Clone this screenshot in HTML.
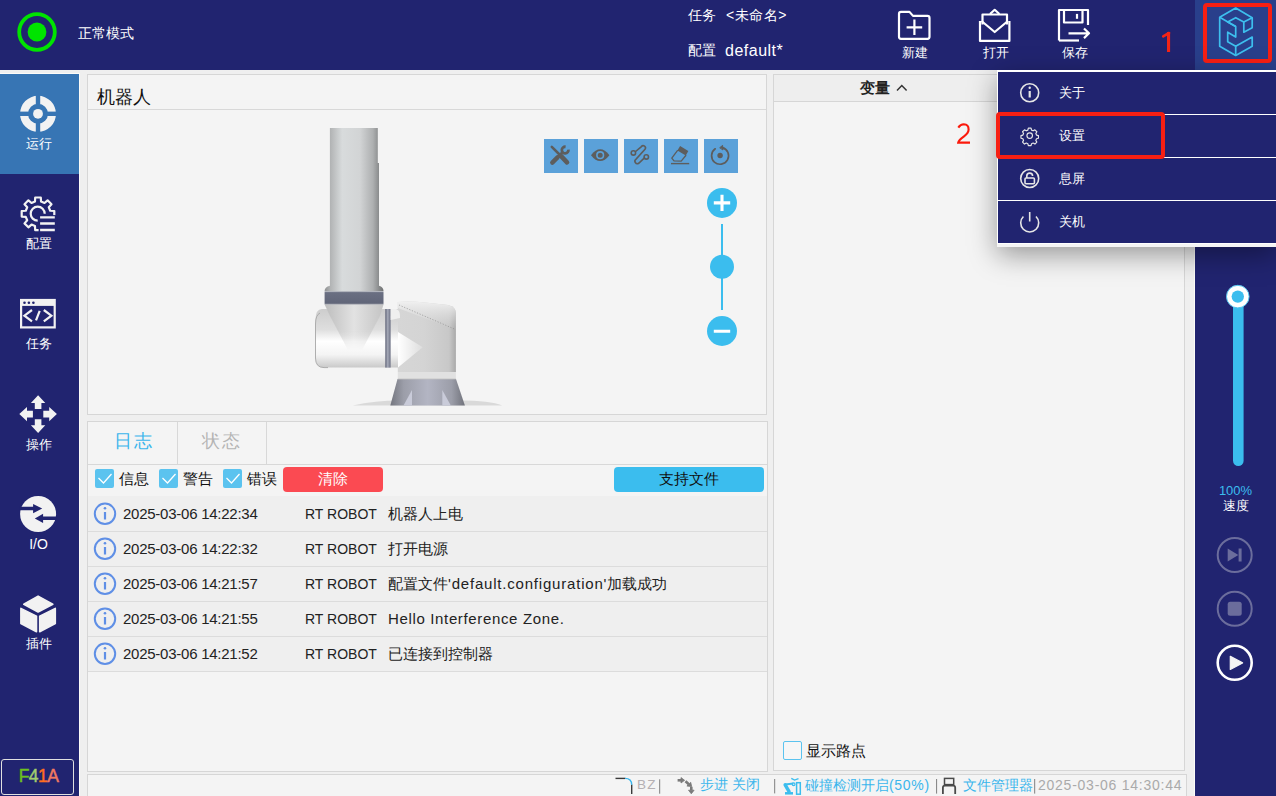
<!DOCTYPE html>
<html><head><meta charset="utf-8">
<style>
*{margin:0;padding:0;box-sizing:border-box}
html,body{width:1276px;height:796px;overflow:hidden;background:#efefef;font-family:"Liberation Sans",sans-serif;position:relative}
.a{position:absolute}
.nav{background:#212470}
.w{color:#fff}
.pnl{background:#f4f4f4;border:1px solid #d6d6d6}
</style></head><body>
<!-- header -->
<div class="a nav" style="left:0;top:0;width:1276px;height:70px"></div>


<!-- right panel -->
<div class="a nav" style="left:1195px;top:70px;width:81px;height:726px"></div>
<!-- right panel content -->
<svg class="a" style="left:1195px;top:247px" width="81" height="450">
<rect x="38" y="45" width="10.6" height="174" rx="5.3" fill="#3bbdee"/>
<circle cx="42.8" cy="49.6" r="11.3" fill="#fff" stroke="#52c4ef" stroke-width="1"/>
<circle cx="42.8" cy="49.6" r="6.2" fill="#3bbdee"/>
<g fill="none" stroke="#6b6d9c" stroke-width="2">
<circle cx="39.7" cy="308" r="17"/>
<circle cx="39.7" cy="361.8" r="17"/>
</g>
<path d="M32.7 301.5 v13 l10.6 -6.5 z" fill="#6b6d9c"/>
<rect x="43.6" y="301.5" width="3" height="13" fill="#6b6d9c"/>
<rect x="32.7" y="354.8" width="14" height="14" rx="2.5" fill="#6b6d9c"/>
<circle cx="39.7" cy="415.8" r="17" fill="none" stroke="#fff" stroke-width="2.6"/>
<path d="M35.3 409.3 v13.2 l12.3 -6.6 z" fill="#f4f4f4" stroke="#f4f4f4" stroke-width="1.2" stroke-linejoin="round"/>
</svg>
<div class="a" style="left:1195px;top:483px;width:81px;text-align:center;font-size:13px;line-height:15px;color:#3bbdee">100%</div>
<div class="a w" style="left:1195px;top:499px;width:81px;text-align:center;font-size:12.5px;line-height:15px">速度</div>
<!-- header content -->
<div class="a" style="left:1195px;top:0;width:81px;height:70px;background:#293f8b"></div>

<svg class="a" style="left:0;top:0" width="80" height="70">
<circle cx="37" cy="32" r="17.8" fill="none" stroke="#00e400" stroke-width="3.8"/>
<circle cx="37" cy="32" r="9.4" fill="#00e400"/>
</svg>
<div class="a w" style="left:78px;top:24px;font-size:14px;line-height:18px">正常模式</div>
<div class="a w" style="left:688px;top:6px;font-size:14px;line-height:18px">任务</div>
<div class="a w" style="left:726px;top:6px;font-size:14px;line-height:18px;letter-spacing:0.5px">&lt;未命名&gt;</div>
<div class="a w" style="left:688px;top:41px;font-size:14px;line-height:18px">配置</div>
<div class="a w" style="left:725px;top:41px;font-size:16px;line-height:20px;letter-spacing:0.5px">default*</div>
<svg class="a" style="left:880px;top:0" width="230" height="70" fill="none" stroke="#fff" stroke-width="2.2" stroke-linejoin="round">
<path d="M19 13.9 a2 2 0 0 1 2 -2 h8.5 l3.5 4 h14.5 a2 2 0 0 1 2 2 v18.9 a2 2 0 0 1 -2 2 h-26.5 a2 2 0 0 1 -2 -2 z"/>
<path d="M34.4 19.5 v15.6 M26.6 27.3 h15.6"/>
<path d="M100 21 v19.9 h29.4 v-19.9"/>
<path d="M101.5 21 l13.2 11 l13.2 -11"/>
<path d="M102.5 24.5 v-10 h24.5 v10"/>
<path d="M110 14 l4.7 -4.2 l4.7 4.2"/>
<path d="M179 40.5 v-30.5 h29 v15"/>
<path d="M184 10 v12.5 h18.5 v-12.5"/>
<path d="M197 13.9 v4.9"/>
<path d="M199 40.5 h-20"/>
<path d="M188.5 33.3 h20.5 M204 28.5 l5 4.8 l-5 4.8"/>
</svg>
<div class="a w" style="left:902px;top:45px;font-size:12.5px;line-height:16px">新建</div>
<div class="a w" style="left:983px;top:45px;font-size:12.5px;line-height:16px">打开</div>
<div class="a w" style="left:1062px;top:45px;font-size:12.5px;line-height:16px">保存</div>
<svg class="a" style="left:1155px;top:25px" width="25" height="33"><rect x="12" y="7" width="3.1" height="20" fill="#f42416"/><path d="M8.2 11.3 L14 8" stroke="#f42416" stroke-width="2.6" stroke-linecap="round"/></svg>
<div class="a" style="left:1203px;top:3px;width:69px;height:60px;border:4px solid #f71f13;border-radius:4px"></div>
<svg class="a" style="left:1210px;top:0" width="56" height="64" fill="none" stroke="#3dbfee" stroke-width="1.7" stroke-linejoin="round">
<path d="M25.7 8 L9.7 17.3 V46.3 L25.7 55.5 L42.2 46.3 V37 L25.7 46.3 L17.7 41.8 V32.2 L25.7 37 V26.5 L17.7 22.1 L25.7 17.7 L33.8 22.1 V32.2 L42.2 27.8 V17.7 Z"/>
<path d="M9.7 17.3 L25.7 26.5 M33.8 22.1 L42.2 17.7 M25.7 46.3 V55.5"/>
</svg>
<!-- left sidebar -->
<div class="a" style="left:0;top:73px;width:80px;height:723px;background:#fcfbf8"></div>
<div class="a" style="left:1194px;top:70px;width:1px;height:726px;background:#fcfcf8"></div>
<div class="a nav" style="left:0;top:74px;width:79px;height:722px"></div>
<div class="a" style="left:0;top:74px;width:79px;height:100px;background:#3775b4"></div>

<!-- sidebar content -->
<svg class="a" style="left:0;top:74px" width="79" height="600" fill="#f2f2f2">
<g transform="translate(38,39.8)">
<path fill-rule="evenodd" d="M0 -18 A18 18 0 1 1 0 18 A18 18 0 1 1 0 -18 Z M0 -10 A10 10 0 1 0 0 10 A10 10 0 1 0 0 -10 Z"/>
<circle r="4.9"/>
<rect x="-2.2" y="-19" width="4.4" height="10" fill="#3775b4"/>
<rect x="-2.2" y="9" width="4.4" height="10" fill="#3775b4"/>
<rect x="-19" y="-2.2" width="10" height="4.4" fill="#3775b4"/>
<rect x="9" y="-2.2" width="10" height="4.4" fill="#3775b4"/>
</g>
<g transform="translate(38,139.8)" fill="none" stroke="#f2f2f2" stroke-width="2.2" stroke-linejoin="round">
<path d="M-3.05 -12.23 L-2.8 -16.3 L2.8 -16.3 L3.05 -12.23 L6.49 -10.80 L9.6 -13.5 L13.5 -9.6 L10.80 -6.49 L12.23 -3.05 L16.3 -2.8 L16.3 2.8 L12.23 3.05 L10.80 6.49 L13.5 9.6 L9.6 13.5 L6.49 10.80 L3.05 12.23 L2.8 16.3 L-2.8 16.3 L-3.05 12.23 L-6.49 10.80 L-9.6 13.5 L-13.5 9.6 L-10.80 6.49 L-12.23 3.05 L-16.3 2.8 L-16.3 -2.8 L-12.23 -3.05 L-10.80 -6.49 L-13.5 -9.6 L-9.6 -13.5 L-6.49 -10.80 Z"/>
<rect x="0.6" y="1.3" width="19" height="18" fill="#212470" stroke="none"/>
<path d="M6.7 -0.1 A7 7 0 1 0 -0.3 6.9"/>
<path d="M2.1 3.6 h14.7 M2.1 9.7 h14.7 M2.1 16.2 h14.7" stroke-width="2.3"/>
</g>
<g transform="translate(0,200)" fill="none" stroke="#f2f2f2" stroke-width="2.2">
<rect x="21.1" y="26" width="33.6" height="27.4"/>
<rect x="21.1" y="25" width="33.6" height="6.9" fill="#f2f2f2" stroke="none"/>
<circle cx="24.5" cy="28.7" r="1.3" fill="#212470" stroke="none"/>
<circle cx="28.9" cy="28.7" r="1.3" fill="#212470" stroke="none"/>
<circle cx="33.4" cy="28.7" r="1.3" fill="#212470" stroke="none"/>
<path d="M32 36 l-7.6 5.7 l7.6 5.7 M43.8 36 l7.6 5.7 l-7.6 5.7 M39.7 36.8 l-3.7 9.6"/>
</g>
<g transform="translate(38.1,340.1)">
<path d="M0 -18.8 L7.2 -11.1 H3.3 V-5.2 H-3.3 V-11.1 H-7.2 Z"/>
<path d="M0 18.8 L7.2 11.1 H3.3 V5.2 H-3.3 V11.1 H-7.2 Z"/>
<path d="M-18.8 0 L-11.1 7.2 V3.3 H-5.2 V-3.3 H-11.1 V-7.2 Z"/>
<path d="M18.8 0 L11.1 7.2 V3.3 H5.2 V-3.3 H11.1 V-7.2 Z"/>
</g>
<g transform="translate(38.1,440)">
<circle r="18"/>
<path d="M-18.5 -7.2 H-5 V-10.1 L4.1 -5.5 L-5 -0.7 V-3.8 H-18.5 Z" fill="#212470"/>
<path d="M18.5 2.6 H5 V-0.3 L-3.3 4.4 L5 9.1 V6 H18.5 Z" fill="#212470"/>
</g>
<g transform="translate(0,500)" stroke="#f2f2f2" stroke-width="1.6" stroke-linejoin="round">
<path d="M38.1 22.1 L52.8 30.3 L38.1 38 L23.8 30.3 Z"/>
<path d="M20.9 34.4 L36.5 42.1 V57.7 L20.9 49.5 Z"/>
<path d="M55.3 34.4 L39.7 42.1 V57.7 L55.3 49.5 Z"/>
</g>
</svg>
<div class="a w" style="left:0;top:136px;width:77px;text-align:center;font-size:13px;line-height:16px">运行</div>
<div class="a w" style="left:0;top:236px;width:77px;text-align:center;font-size:13px;line-height:16px">配置</div>
<div class="a w" style="left:0;top:336px;width:77px;text-align:center;font-size:13px;line-height:16px">任务</div>
<div class="a w" style="left:0;top:437px;width:77px;text-align:center;font-size:13px;line-height:16px">操作</div>
<div class="a w" style="left:0;top:536px;width:77px;text-align:center;font-size:14px;line-height:16px">I/O</div>
<div class="a w" style="left:0;top:636px;width:77px;text-align:center;font-size:13px;line-height:16px">插件</div>
<div class="a" style="left:1px;top:759px;width:73px;height:36px;border:1.5px solid #e0e0e0;border-radius:3px"></div>
<div class="a" style="left:1px;top:766px;width:75px;text-align:center;font-size:17.5px;line-height:20px;-webkit-text-stroke:0.45px currentColor;letter-spacing:-0.6px"><span style="color:#6cc11f;-webkit-text-stroke:0.45px #6cc11f">F</span><span style="color:#a3cf6d;-webkit-text-stroke:0.45px #a3cf6d">4</span><span style="color:#ff6d1f;-webkit-text-stroke:0.45px #ff6d1f">1</span><span style="color:#f17a60;-webkit-text-stroke:0.45px #f17a60">A</span></div>
<!-- robot panel -->
<div class="a pnl" style="left:87px;top:74px;width:680px;height:341px"></div>

<!-- robot panel content -->
<div class="a" style="left:97px;top:87px;font-size:18px;line-height:21px;color:#111">机器人</div>
<div class="a" style="left:88px;top:109px;width:678px;height:1px;background:#d8d8d8"></div>
<svg class="a" style="left:300px;top:110px" width="230" height="296">
<defs>
<linearGradient id="cyl" x1="0" x2="1" y1="0" y2="0">
<stop offset="0" stop-color="#8f9192"/><stop offset="0.1" stop-color="#b2b4b5"/><stop offset="0.3" stop-color="#d8dbdc"/><stop offset="0.6" stop-color="#d2d4d5"/><stop offset="0.82" stop-color="#aeb0b1"/><stop offset="1" stop-color="#6e7071"/>
</linearGradient>
<linearGradient id="band" x1="0" x2="0" y1="0" y2="1">
<stop offset="0" stop-color="#d2d4d8"/><stop offset="0.12" stop-color="#6a6f82"/><stop offset="0.88" stop-color="#616679"/><stop offset="1" stop-color="#8d909c"/>
</linearGradient>
<linearGradient id="tube" x1="0" x2="0" y1="0" y2="1">
<stop offset="0" stop-color="#cdcdcd"/><stop offset="0.35" stop-color="#dedede"/><stop offset="0.55" stop-color="#ffffff"/><stop offset="0.78" stop-color="#f4f4f4"/><stop offset="1" stop-color="#c9c9c9"/>
</linearGradient>
<linearGradient id="cone" x1="0" x2="1" y1="0" y2="0">
<stop offset="0" stop-color="#bdbdbd"/><stop offset="0.5" stop-color="#e2e2e2"/><stop offset="1" stop-color="#c4c4c4"/>
</linearGradient>
<linearGradient id="joint" x1="0" x2="1" y1="0" y2="0">
<stop offset="0" stop-color="#d6d6d6"/><stop offset="0.45" stop-color="#d4d4d4"/><stop offset="0.88" stop-color="#c8c8c8"/><stop offset="1" stop-color="#a9a9a9"/>
</linearGradient>
<linearGradient id="jtop" x1="0" x2="0" y1="0" y2="1">
<stop offset="0" stop-color="#f0f0f0"/><stop offset="1" stop-color="#d6d6d6" stop-opacity="0"/>
</linearGradient>
<linearGradient id="base" x1="0" x2="1" y1="0" y2="0">
<stop offset="0" stop-color="#74767f"/><stop offset="0.18" stop-color="#9c9ea9"/><stop offset="0.5" stop-color="#b3b5c3"/><stop offset="0.82" stop-color="#9c9ea9"/><stop offset="1" stop-color="#70727b"/>
</linearGradient>
<linearGradient id="ring" x1="0" x2="1" y1="0" y2="0">
<stop offset="0" stop-color="#5e6276"/><stop offset="0.45" stop-color="#a6aab8"/><stop offset="1" stop-color="#6a6e82"/>
</linearGradient>
<radialGradient id="hl" cx="0.5" cy="0.5" r="0.5">
<stop offset="0" stop-color="#ffffff"/><stop offset="1" stop-color="#ffffff" stop-opacity="0"/>
</radialGradient>
<linearGradient id="hw" x1="0" x2="1" y1="0" y2="0"><stop offset="0" stop-color="#ffffff"/><stop offset="1" stop-color="#ffffff" stop-opacity="0.2"/></linearGradient>
<linearGradient id="cmg" x1="0" x2="0" y1="0" y2="1"><stop offset="0.55" stop-color="#fff"/><stop offset="1" stop-color="#000"/></linearGradient>
<mask id="cm" maskUnits="userSpaceOnUse" x="0" y="190" width="100" height="55"><rect x="0" y="194" width="100" height="46" fill="url(#cmg)"/></mask>
</defs>
<path d="M52.7 295.5 Q75 290.6 100 290.6 L160 290.6 Q190 290.6 202.2 295.5 Z" fill="#d9d9d9"/>
<path d="M97.5 269 H156 L164.9 295.5 H90.3 Z" fill="url(#base)"/>
<path d="M112 280 V295.5 H103.5 Z" fill="#c9cbd9"/>
<path d="M142.3 280 V295.5 H150.8 Z" fill="#c9cbd9"/>

<rect x="97.8" y="262" width="58.1" height="7" fill="#e1e1e1"/>
<path d="M97.8 269 H155.9" stroke="#c0c0c0" stroke-width="0.8"/>
<path d="M97.8 192 Q110 191 125 192.5 L148 195 Q155.9 197 155.9 203 V262 H97.8 Z" fill="url(#joint)"/>
<path d="M97.8 192 Q110 191 125 192.5 L148 195 Q155.9 197 155.9 203 V220 L97.8 198 Z" fill="url(#jtop)"/>
<path d="M99 195 L155.5 219.5" stroke="#8e8e8e" stroke-width="0.7" stroke-dasharray="1.2 1.6" fill="none"/>
<path d="M22 199 Q15.5 199 15.5 210 V248 Q15.5 257.6 24 257.6 H98 V199 Z" fill="url(#tube)"/>
<path d="M98 222 L122.7 237.3 L98 257.6 Z" fill="url(#hw)"/>
<path d="M20 203 Q15.5 205 15.5 214 V248 Q15.5 257.6 24 257.6 H28" fill="none" stroke="#a6a6a6" stroke-width="0.9"/>
<path d="M24.6 194.5 H83.5 L80 206 L62 240 H48 L30 206 Z" fill="url(#cone)" mask="url(#cm)"/>


<rect x="85.3" y="199" width="5.3" height="58.6" fill="url(#ring)"/>
<path d="M90.6 199 H96 Q100 200 100 206 V208 L90.6 210 Z" fill="#efefef"/>
<path d="M29.9 17.9 H77.8 V53 H79 V175.8 Q83.5 177 83.5 181 H24.6 Q24.6 177 29.9 175.8 Z" fill="url(#cyl)"/>
<rect x="24.6" y="181" width="58.9" height="13.5" fill="url(#band)"/>
</svg>
<svg class="a" style="left:540px;top:135px" width="210" height="215">
<g fill="#5ba1d9">
<rect x="4" y="4" width="34" height="34"/><rect x="44" y="4" width="34" height="34"/><rect x="84" y="4" width="34" height="34"/><rect x="124" y="4" width="34" height="34"/><rect x="164" y="4" width="34" height="34"/>
</g>
<g fill="none" stroke="#5d5d5d" stroke-linecap="round">
<path d="M11.8 11.8 L20.5 20.5" stroke-width="2.6"/>
<path d="M21.6 21.6 L27 27.3" stroke-width="4.6"/>
<path d="M12.3 27.6 L17.5 22.4" stroke-width="4.4"/>
<path d="M18 22 L21.2 18.8" stroke-width="3.2"/>
<path d="M28.4 14.6 A3.3 3.3 0 1 1 25.6 11.8" stroke-width="2.8" stroke-linecap="butt"/>
<path d="M51 20.2 Q60.2 8.4 69.4 20.2 Q60.2 32 51 20.2 Z" fill="#5d5d5d" stroke="none"/>
<circle cx="60.2" cy="20.2" r="3.3" fill="none" stroke="#5ba1d9" stroke-width="1.6"/>
<circle cx="93.4" cy="17.9" r="2.2" stroke-width="1.6"/>
<circle cx="106.3" cy="21.9" r="2.2" stroke-width="1.6"/>
<path d="M95.6 16.5 L101.4 11.6 A2.25 2.25 0 0 1 105 14.3 L96.1 24.1 A2.47 2.47 0 0 0 98.7 28.3 L104.4 22.9" stroke-width="1.6"/>
<path d="M140.1 11 L148.3 16.1 L145.8 20.5 L137.4 15.6 Z" fill="#5d5d5d" stroke="none"/>
<path d="M137.4 15.6 L131.8 23.2 L134 25.9 L141.2 26.2 L145.8 20.5" stroke-width="1.3" stroke-linejoin="round"/>
<path d="M131 28.6 H149.2" stroke-width="1.4" stroke-linecap="butt"/>
<path d="M182.5 12.6 A8.5 8.5 0 1 1 175.2 13.8" stroke-width="1.7"/>
<path d="M180 12.5 L182.6 10.4 L182.9 14.6 Z" fill="#5d5d5d" stroke-width="1" stroke-linejoin="round"/>
<circle cx="180.1" cy="20.5" r="2.7" fill="#5d5d5d" stroke="none"/>
</g>
<g fill="#3bbdee">
<circle cx="182" cy="67.9" r="15"/>
<rect x="181" y="89" width="2" height="86"/>
<circle cx="182" cy="131.8" r="12"/>
<circle cx="182" cy="196" r="15"/>
</g>
<path d="M173.8 67.9 h16.4 M182 59.7 v16.4 M173.8 196.3 h16.4" stroke="#fff" stroke-width="3.1"/>
</svg>
<!-- log panel -->
<div class="a pnl" style="left:87px;top:421px;width:681px;height:351px"></div>

<!-- log panel content -->
<div class="a" style="left:88px;top:464px;width:679px;height:1px;background:#d8d8d8"></div>
<div class="a" style="left:177px;top:422px;width:1px;height:42px;background:#d8d8d8"></div>
<div class="a" style="left:266px;top:422px;width:1px;height:42px;background:#d8d8d8"></div>
<div class="a" style="left:114px;top:431px;font-size:18px;line-height:21px;letter-spacing:1.5px;color:#3bb6ec">日志</div>
<div class="a" style="left:202px;top:431px;font-size:18px;line-height:21px;letter-spacing:1.5px;color:#b4b4b4">状态</div>
<svg class="a" style="left:88px;top:465px" width="300" height="30">
<g fill="#5bc3ef"><rect x="7" y="4" width="19" height="19" rx="2"/><rect x="71" y="4" width="19" height="19" rx="2"/><rect x="135" y="4" width="19" height="19" rx="2"/></g>
<g fill="none" stroke="#fff" stroke-width="1.3"><path d="M10.5 13 l5 5 l8 -9"/><path d="M74.5 13 l5 5 l8 -9"/><path d="M138.5 13 l5 5 l8 -9"/></g>
</svg>
<div class="a" style="left:119px;top:469px;font-size:15px;line-height:19px;color:#111">信息</div>
<div class="a" style="left:183px;top:469px;font-size:15px;line-height:19px;color:#111">警告</div>
<div class="a" style="left:247px;top:469px;font-size:15px;line-height:19px;color:#111">错误</div>
<div class="a" style="left:283px;top:467px;width:100px;height:25px;background:#fb4a52;border-radius:4px;color:#fff;text-align:center;font-size:15px;line-height:23px">清除</div>
<div class="a" style="left:614px;top:467px;width:150px;height:25px;background:#3bbdee;border-radius:4px;color:#111;text-align:center;font-size:15px;line-height:23px">支持文件</div>
<div class="a" style="left:88px;top:496px;width:679px;height:175px;background:#efefef"></div>
<div class="a" style="left:88px;top:531px;width:679px;height:1px;background:#dcdcdc"></div>
<div class="a" style="left:88px;top:566px;width:679px;height:1px;background:#dcdcdc"></div>
<div class="a" style="left:88px;top:601px;width:679px;height:1px;background:#dcdcdc"></div>
<div class="a" style="left:88px;top:636px;width:679px;height:1px;background:#dcdcdc"></div>
<div class="a" style="left:88px;top:671px;width:679px;height:1px;background:#dcdcdc"></div>
<svg class="a" style="left:88px;top:496px" width="30" height="175" fill="none" stroke="#5f8fe6" stroke-width="1.8">
<g transform="translate(0,0)"><circle cx="17" cy="17.8" r="10.2" stroke-width="2"/><path d="M17 16 v7.5" stroke-width="2.2"/><circle cx="17" cy="12.3" r="1.3" fill="#5f8fe6" stroke="none"/></g><g transform="translate(0,35)"><circle cx="17" cy="17.8" r="10.2" stroke-width="2"/><path d="M17 16 v7.5" stroke-width="2.2"/><circle cx="17" cy="12.3" r="1.3" fill="#5f8fe6" stroke="none"/></g><g transform="translate(0,70)"><circle cx="17" cy="17.8" r="10.2" stroke-width="2"/><path d="M17 16 v7.5" stroke-width="2.2"/><circle cx="17" cy="12.3" r="1.3" fill="#5f8fe6" stroke="none"/></g><g transform="translate(0,105)"><circle cx="17" cy="17.8" r="10.2" stroke-width="2"/><path d="M17 16 v7.5" stroke-width="2.2"/><circle cx="17" cy="12.3" r="1.3" fill="#5f8fe6" stroke="none"/></g><g transform="translate(0,140)"><circle cx="17" cy="17.8" r="10.2" stroke-width="2"/><path d="M17 16 v7.5" stroke-width="2.2"/><circle cx="17" cy="12.3" r="1.3" fill="#5f8fe6" stroke="none"/></g>
</svg>
<div class="a" style="left:123px;top:504px;font-size:15px;line-height:19px;color:#222;letter-spacing:-0.25px">
<div style="height:35px">2025-03-06 14:22:34</div>
<div style="height:35px">2025-03-06 14:22:32</div>
<div style="height:35px">2025-03-06 14:21:57</div>
<div style="height:35px">2025-03-06 14:21:55</div>
<div style="height:35px">2025-03-06 14:21:52</div>
</div>
<div class="a" style="left:305px;top:505px;font-size:14px;line-height:19px;color:#222">
<div style="height:35px">RT ROBOT</div><div style="height:35px">RT ROBOT</div><div style="height:35px">RT ROBOT</div><div style="height:35px">RT ROBOT</div><div style="height:35px">RT ROBOT</div>
</div>
<div class="a" style="left:388px;top:504px;font-size:15px;line-height:19px;color:#222">
<div style="height:35px">机器人上电</div>
<div style="height:35px">打开电源</div>
<div style="height:35px">配置文件<span style="letter-spacing:0.8px">'default.configuration'</span>加载成功</div>
<div style="height:35px;letter-spacing:0.65px">Hello Interference Zone.</div>
<div style="height:35px">已连接到控制器</div>
</div>
<!-- var panel -->
<div class="a pnl" style="left:773px;top:74px;width:412px;height:697px"></div>

<!-- var panel content -->
<div class="a" style="left:774px;top:75px;width:410px;height:27px;background:#eeeeee;border-bottom:1px solid #d6d6d6"></div>
<div class="a" style="left:860px;top:78px;font-size:15px;line-height:19px;color:#222;font-weight:600">变量</div>
<svg class="a" style="left:894px;top:80px" width="14" height="14"><path d="M3 10.5 l4.8 -5 l4.8 5" fill="none" stroke="#333" stroke-width="1.5"/></svg>
<div class="a" style="left:783px;top:741px;width:19px;height:19px;border:1.5px solid #5bc3ef;border-radius:2px;background:#f6f6f6"></div>
<div class="a" style="left:806px;top:741px;font-size:15px;line-height:19px;color:#111">显示路点</div>
<!-- status bar -->
<div class="a pnl" style="left:87px;top:774px;width:1100px;height:30px"></div>

<!-- status bar content -->
<svg class="a" style="left:600px;top:774px" width="600" height="22">
<path d="M15.5 4.4 H25.2" fill="none" stroke="#3a3a3a" stroke-width="1.4"/>
<path d="M31.7 10.4 V20.1" fill="none" stroke="#3a3a3a" stroke-width="1.4"/>
<path d="M25 4.4 Q31.7 4.4 31.7 10.8" fill="none" stroke="#3bb6ec" stroke-width="1.4"/>
<rect x="59.1" y="5.3" width="1.1" height="14.4" fill="#8a8a8a"/>
<g stroke="#7a7a7a" fill="#7a7a7a" stroke-width="2.6">
<path d="M77.6 6.3 H81.5" fill="none"/>
<path d="M81 3.6 L84.6 6.3 L81 9 Z" stroke-width="0.8"/>
<path d="M85.5 7.3 L88.8 10.3" fill="none"/>
<path d="M86.9 12 L91.7 12.6 L90.7 8.3 Z" stroke-width="0.8"/>
<path d="M91.3 12.8 V16.5" fill="none"/>
<path d="M88.5 16.2 H94.1 L91.3 19.8 Z" stroke-width="0.8"/>
</g>
<rect x="174.1" y="5" width="1.1" height="14.4" fill="#8a8a8a"/>
<g fill="none" stroke="#3bbdee">
<path d="M185 19.3 H193" stroke-width="2.5"/>
<path d="M185.2 10.8 L189.5 18.3" stroke-width="3.4"/>
<path d="M185 10.5 L193.3 9.6" stroke-width="2"/>
<circle cx="185.2" cy="10.8" r="1.8" fill="#3bbdee" stroke="none"/>
<circle cx="193.6" cy="10.3" r="1.4" stroke-width="1.2"/>
<path d="M191.3 4.4 L194.6 6.1 L198.5 4.7" stroke-width="1.4"/>
<rect x="196.6" y="8.7" width="3.7" height="11.5" stroke-width="1.5"/>
</g>
<rect x="336" y="5" width="1.1" height="14.6" fill="#8a8a8a"/>
<g fill="none" stroke="#4a4a4a">
<rect x="344.5" y="4.4" width="9.2" height="6.2" stroke-width="1.5"/>
<path d="M342.9 20 V13.6 Q342.9 11.6 344.9 11.6 H353.2 Q355.2 11.6 355.2 13.6 V20" stroke-width="1.8"/>
</g>
<rect x="434.1" y="5" width="1.1" height="14.6" fill="#8a8a8a"/>
</svg>
<div class="a" style="left:637px;top:777px;font-size:13.5px;line-height:16px;letter-spacing:1.2px;color:#b5b0b3">BZ</div>
<div class="a" style="left:700px;top:777px;font-size:13.5px;line-height:16px;color:#3bb6ec">步进 关闭</div>
<div class="a" style="left:805px;top:776px;font-size:14px;line-height:18px;color:#3bb6ec">碰撞检测开启<span style="letter-spacing:0.7px">(50%)</span></div>
<div class="a" style="left:963px;top:776px;font-size:14px;line-height:18px;color:#3bb6ec">文件管理器</div>
<div class="a" style="left:1038px;top:776px;font-size:14px;line-height:18px;color:#aaaaaa;letter-spacing:0.75px">2025-03-06 14:30:44</div>
<!-- menu -->
<div class="a" style="left:997px;top:70px;width:279px;height:177px;background:#f4f4f4;box-shadow:0 8px 26px rgba(0,0,0,0.38)"></div>
<div class="a" style="left:997px;top:70px;width:279px;height:174px;background:#fff"></div>
<div class="a nav" style="left:998px;top:72px;width:278px;height:171px"></div>
<div class="a" style="left:998px;top:114px;width:278px;height:1px;background:#fff"></div>
<div class="a" style="left:998px;top:157px;width:278px;height:1px;background:#fff"></div>
<div class="a" style="left:998px;top:200px;width:278px;height:1px;background:#fff"></div>
<svg class="a" style="left:1010px;top:72px" width="40" height="171" fill="none" stroke="#e6e6e6" stroke-width="1.6">
<circle cx="19.7" cy="20.7" r="9"/>
<path d="M19.7 19 v6.5" stroke-width="2.2"/><circle cx="19.7" cy="15.8" r="1.2" fill="#e6e6e6" stroke="none"/>
<g transform="translate(19.7,63.6) scale(0.84)">
<path d="M-1.6 -8.8 h3.2 l0.6 2.3 l1.9 0.8 l2.1 -1.2 l2.3 2.3 l-1.2 2.1 l0.8 1.9 l2.3 0.6 v3.2 l-2.3 0.6 l-0.8 1.9 l1.2 2.1 l-2.3 2.3 l-2.1 -1.2 l-1.9 0.8 l-0.6 2.3 h-3.2 l-0.6 -2.3 l-1.9 -0.8 l-2.1 1.2 l-2.3 -2.3 l1.2 -2.1 l-0.8 -1.9 l-2.3 -0.6 v-3.2 l2.3 -0.6 l0.8 -1.9 l-1.2 -2.1 l2.3 -2.3 l2.1 1.2 l1.9 -0.8 z" stroke-linejoin="round" stroke-width="1.4"/>
<circle r="3.3" stroke-width="1.4"/>
</g>
<circle cx="19.7" cy="106.5" r="9"/>
<rect x="15" y="106" width="9.4" height="5.8" rx="1"/>
<path d="M16.8 106 v-2 a2.9 2.9 0 0 1 5.8 0"/>
<path d="M13.4 144.5 a9 9 0 1 0 12.6 0"/>
<path d="M19.7 140 v9.5"/>
</svg>
<div class="a w" style="left:1059px;top:85px;font-size:12.5px;line-height:16px">关于</div>
<div class="a w" style="left:1059px;top:128px;font-size:12.5px;line-height:16px">设置</div>
<div class="a w" style="left:1059px;top:171px;font-size:12.5px;line-height:16px">息屏</div>
<div class="a w" style="left:1059px;top:214px;font-size:12.5px;line-height:16px">关机</div>
<div class="a" style="left:996px;top:112px;width:169px;height:47px;border:4px solid #f71f13;border-radius:4px"></div>
<svg class="a" style="left:950px;top:118px" width="28" height="32"><path d="M8.3 9.6 Q10.5 6.3 13.8 6.3 Q18.6 6.5 18.6 11.4 Q18.6 14.8 14 18.4 Q8.6 22.4 8.2 24.6 H20" fill="none" stroke="#fb1a0c" stroke-width="2.1"/></svg>
</body></html>
